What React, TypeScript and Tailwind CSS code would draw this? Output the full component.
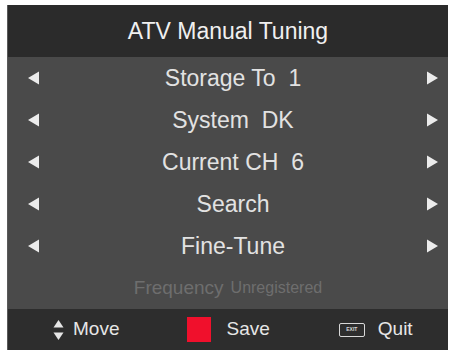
const ROWS = ['Storage To  1', 'System  DK', 'Current CH  6', 'Search', 'Fine-Tune'];

function LeftArrow() {
  return (
    <svg width="13" height="16" viewBox="0 0 13 16" className="shrink-0">
      <path d="M12 1.5 L1 8 L12 14.5 Z" fill="#ececec" />
    </svg>
  );
}

function RightArrow() {
  return (
    <svg width="13" height="16" viewBox="0 0 13 16" className="shrink-0">
      <path d="M1 1.5 L12 8 L1 14.5 Z" fill="#ececec" />
    </svg>
  );
}

export default function App() {
  return (
    <div className="w-[451px] h-[353px] bg-white pt-[5px] pl-[7px]" style={{ fontFamily: '"Liberation Sans", Arial, sans-serif' }}>
      <div className="w-[441px] h-[345px] flex flex-col bg-[#4a4a4a] border-l border-[#5a5a5a]">
        {/* Header */}
        <div className="h-[52px] bg-[#2b2b2b] flex items-center justify-center text-[23px] text-[#f0f0f0]">
          ATV Manual Tuning
        </div>

        {/* Menu rows */}
        <div className="flex flex-col">
          {ROWS.map((r) => (
            <div key={r} className="h-[42px] flex items-center pl-[19px] pr-[9px] text-[#e2e2e2]">
              <LeftArrow />
              <span className="flex-1 text-center text-[23px] whitespace-pre">{r}</span>
              <RightArrow />
            </div>
          ))}
          <div className="h-[42px] flex items-center justify-center gap-[7px] text-[#6e6e6e]">
            <span className="text-[19px]">Frequency</span>
            <span className="text-[16px]">Unregistered</span>
          </div>
        </div>

        {/* Footer */}
        <div className="flex-1 bg-[#2d2d2d] flex items-center text-[19px] text-[#e6e6e6]">
          <div className="flex items-center ml-[45px] gap-[9px]">
            <svg width="11" height="22" viewBox="0 0 11 22">
              <path d="M5.5 1 L10.5 8.5 L0.5 8.5 Z" fill="#e6e6e6" />
              <path d="M0.5 13.5 L10.5 13.5 L5.5 21 Z" fill="#e6e6e6" />
            </svg>
            <span>Move</span>
          </div>
          <div className="flex items-center ml-[68px] gap-[15px]">
            <div className="w-[24px] h-[25px] bg-[#f0102c]" />
            <span>Save</span>
          </div>
          <div className="flex items-center ml-[69px] gap-[13px]">
            <div className="w-[26px] h-[14px] border-[1.5px] border-[#d8d8d8] rounded-[2px] flex items-center justify-center">
              <span className="text-[5px] leading-none font-bold text-[#d8d8d8]">EXIT</span>
            </div>
            <span>Quit</span>
          </div>
        </div>
      </div>
    </div>
  );
}
